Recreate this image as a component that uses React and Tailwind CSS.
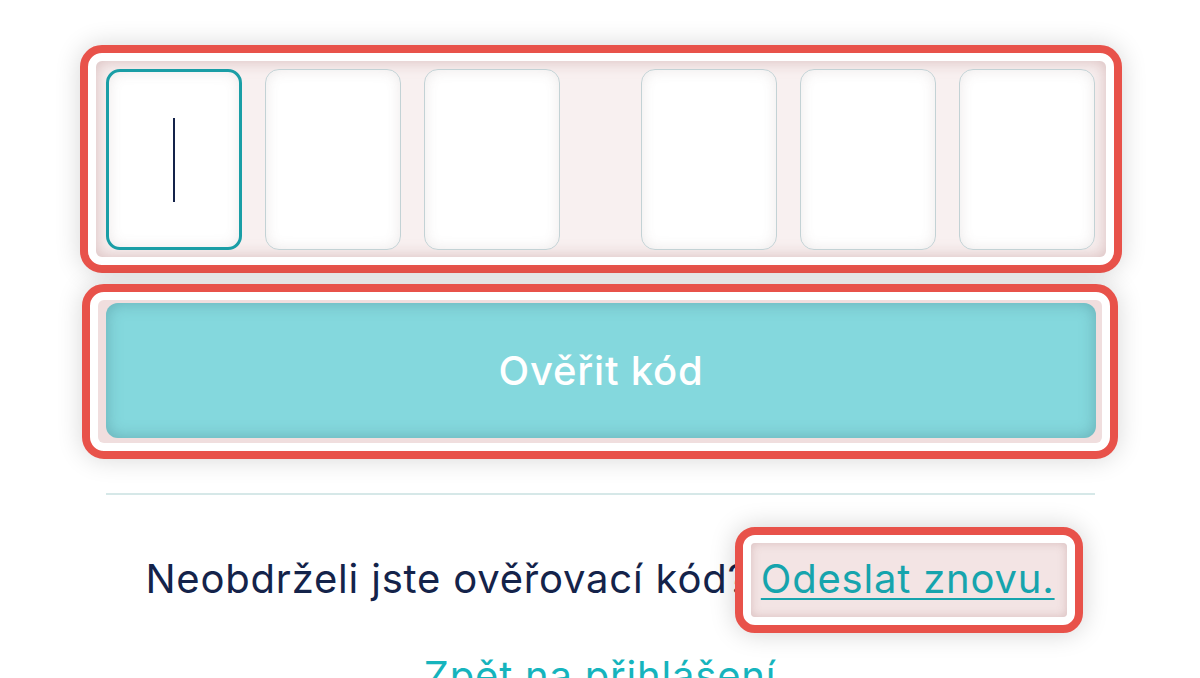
import React from 'react';

const font = { fontFamily: 'Inter, "Noto Sans", sans-serif' };

function Digit({ focused }) {
    return (
        <div
            className={`w-[136px] h-[181px] shrink-0 rounded-[14px] bg-white flex items-center justify-center shadow-[inset_0_0_14px_rgba(120,90,90,0.14)] ${
                focused ? 'border-[3px] border-[#1a9ea6]' : 'border-[1.5px] border-[#c3d2d5]'
            }`}
        >
            {focused && <div className="w-[2px] h-[84px] bg-[#14234a]" />}
        </div>
    );
}

export default function App() {
    return (
        <div className="w-[1200px] h-[678px] overflow-hidden bg-white flex flex-col items-start" style={font}>
            {/* Code inputs, highlighted */}
            <div className="shrink-0 mt-[45px] ml-[80px] w-[1042px] h-[228px] border-[8px] border-[#e8524a] rounded-[22px] p-[8px] bg-white shadow-[0_0_26px_rgba(0,0,0,0.16)]">
                <div className="h-full rounded-[6px] bg-[#f8f0f0] shadow-[inset_0_0_16px_rgba(170,110,110,0.4)] pl-[10px] pt-[8px]">
                    <div className="flex">
                        <div className="flex gap-[23px]">
                            <Digit focused />
                            <Digit />
                            <Digit />
                        </div>
                        <div className="flex gap-[23px] ml-[81px]">
                            <Digit />
                            <Digit />
                            <Digit />
                        </div>
                    </div>
                </div>
            </div>

            {/* Verify button, highlighted */}
            <div className="shrink-0 mt-[11px] ml-[82px] w-[1036px] h-[175px] border-[8px] border-[#e8524a] rounded-[22px] p-[8px] bg-white shadow-[0_0_26px_rgba(0,0,0,0.16)]">
                <div className="h-full rounded-[6px] bg-[#f0dede] pl-[8px] pt-[3px]">
                    <button className="w-[990px] h-[135px] rounded-[12px] bg-[#84d8dd] shadow-[inset_0_0_16px_rgba(60,110,120,0.4)] text-white text-[40px] font-medium tracking-[0.8px]">
                        Ověřit kód
                    </button>
                </div>
            </div>

            {/* Divider */}
            <div className="shrink-0 mt-[34px] ml-[106px] w-[989px] h-[2px] bg-[#d6e8e8]" />

            {/* Resend row */}
            <div className="shrink-0 mt-[60px] w-full text-center text-[40px] leading-[48px] tracking-[0.8px] text-[#14234a]">
                Neobdrželi jste ověřovací kód?{' '}
                <span className="relative inline-block">
                    <span className="absolute -left-[26px] -right-[28px] -top-[28px] -bottom-[30px] border-[8px] border-[#e8524a] rounded-[20px] p-[8px] bg-white shadow-[0_0_26px_rgba(0,0,0,0.18)]">
                        <span className="block h-full rounded-[4px] bg-[#f3e4e4] shadow-[inset_0_0_10px_rgba(170,120,120,0.35)]" />
                    </span>
                    <a className="relative text-[#16a4ad] underline underline-offset-[5px] decoration-[2px]">Odeslat znovu.</a>
                </span>
            </div>

            {/* Back link */}
            <div className="shrink-0 mt-[49px] w-full text-center text-[40px] leading-[48px] tracking-[0.8px] text-[#16b4bd]">
                Zpět na přihlášení
            </div>
        </div>
    );
}
